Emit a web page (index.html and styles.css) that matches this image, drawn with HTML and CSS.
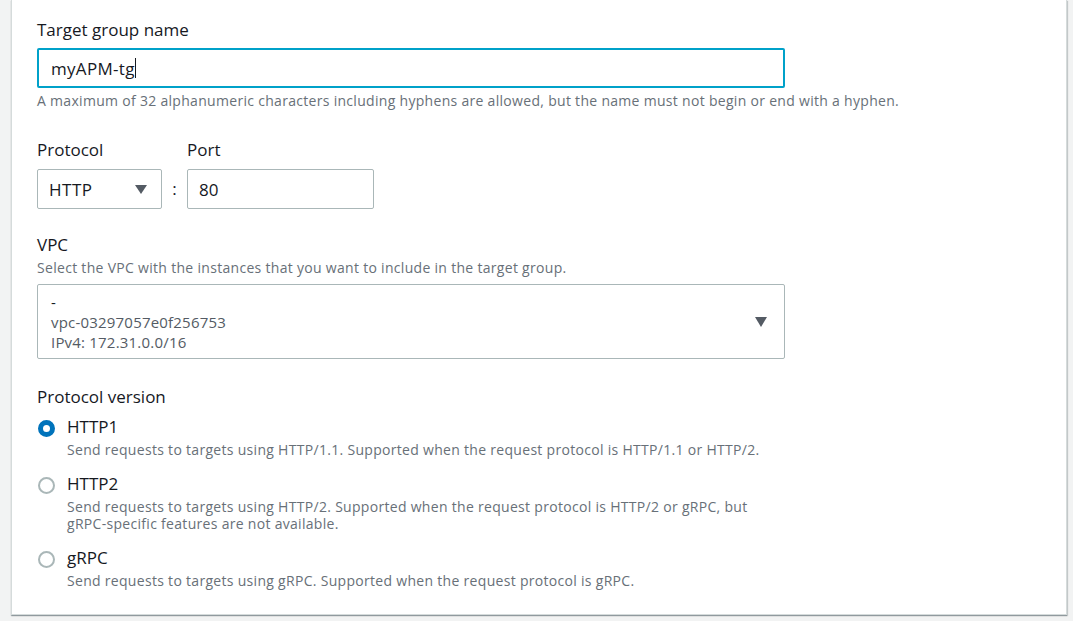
FILE: index.html
```html
<!DOCTYPE html>
<html>
<head>
<meta charset="utf-8">
<link rel="stylesheet" href="styles.css">
</head>
<body>
<div class="page">
  <div class="card">
    <div class="field">
      <div class="label">Target group name</div>
      <div class="input focused"><span>myAPM-tg</span><span class="caret"></span></div>
      <div class="hint">A maximum of 32 alphanumeric characters including hyphens are allowed, but the name must not begin or end with a hyphen.</div>
    </div>

    <div class="row">
      <div class="col">
        <div class="label">Protocol</div>
        <div class="select proto"><span>HTTP</span><span class="arrow"></span></div>
      </div>
      <div class="colon">:</div>
      <div class="col">
        <div class="label">Port</div>
        <div class="input port">80</div>
      </div>
    </div>

    <div class="field vpc-field">
      <div class="label">VPC</div>
      <div class="desc">Select the VPC with the instances that you want to include in the target group.</div>
      <div class="select vpc">
        <div class="vpc-lines">
          <div class="dash">-</div>
          <div>vpc-03297057e0f256753</div>
          <div>IPv4: 172.31.0.0/16</div>
        </div>
        <span class="arrow big"></span>
      </div>
    </div>

    <div class="field pv">
      <div class="label">Protocol version</div>
      <div class="radio">
        <span class="dot checked"></span>
        <div>
          <div class="rlabel">HTTP1</div>
          <div class="rdesc">Send requests to targets using HTTP/1.1. Supported when the request protocol is HTTP/1.1 or HTTP/2.</div>
        </div>
      </div>
      <div class="radio">
        <span class="dot"></span>
        <div>
          <div class="rlabel">HTTP2</div>
          <div class="rdesc">Send requests to targets using HTTP/2. Supported when the request protocol is HTTP/2 or gRPC, but<br>gRPC-specific features are not available.</div>
        </div>
      </div>
      <div class="radio">
        <span class="dot"></span>
        <div>
          <div class="rlabel">gRPC</div>
          <div class="rdesc">Send requests to targets using gRPC. Supported when the request protocol is gRPC.</div>
        </div>
      </div>
    </div>
  </div>
</div>
</body>
</html>
```

FILE: styles.css
```css
* { box-sizing: border-box; }
html, body { margin: 0; padding: 0; }
body {
  background: #f2f3f3;
  font-family: "Open Sans", "Liberation Sans", sans-serif;
  color: #16191f;
  width: 1073px;
  height: 621px;
  overflow: hidden;
}
.page {
  padding: 0 6px 0 11px;
}
.card {
  background: #fff;
  border: 1px solid #d5dbdb;
  border-top: none;
  box-shadow: 0 1px 1px 0 rgba(0,28,36,0.3), 1px 1px 1px 0 rgba(0,28,36,0.15);
  height: 615px;
  padding: 18px 25px 0 25px;
}
.label {
  font-size: 17px;
  line-height: 24px;
  color: #16191f;
}
.input {
  height: 40px;
  border: 1px solid #aab7b8;
  border-radius: 2px;
  font-size: 17px;
  display: flex;
  align-items: center;
  padding: 0 11px;
  color: #16191f;
}
.field > .input.focused {
  margin-top: 6px;
  width: 748px;
  border: 2px solid #00a1c9;
  padding: 0 12px;
  height: 40px;
  letter-spacing: 0.3px;
}
.caret {
  display: inline-block;
  width: 1px;
  height: 20px;
  background: #16191f;
  margin-left: 0;
}
.hint {
  font-size: 14px;
  letter-spacing: 0.3px;
  line-height: 18px;
  color: #687078;
  margin-top: 4px;
  white-space: nowrap;
}
.row {
  display: flex;
  align-items: flex-end;
  margin-top: 28px;
}
.col .label { margin-bottom: 7px; }
.select {
  border: 1px solid #aab7b8;
  border-radius: 2px;
  display: flex;
  align-items: center;
  justify-content: space-between;
  font-size: 17px;
}
.proto {
  width: 125px;
  height: 40px;
  padding: 0 14px 0 11px;
  letter-spacing: 0.5px;
}
.arrow {
  width: 0;
  height: 0;
  border-left: 6px solid transparent;
  border-right: 6px solid transparent;
  border-top: 9px solid #545b64;
}
.arrow.big {
  border-left-width: 6.5px;
  border-right-width: 6.5px;
  border-top-width: 10px;
}
.colon {
  width: 25px;
  text-align: center;
  font-size: 17px;
  line-height: 40px;
  height: 40px;
  color: #16191f;
}
.port {
  width: 187px;
}
.vpc-field { margin-top: 24px; }
.desc {
  font-size: 14px;
  letter-spacing: 0.3px;
  line-height: 18px;
  color: #687078;
  margin-top: 2px;
}
.select.vpc {
  width: 748px;
  height: 75px;
  margin-top: 7px;
  padding: 0 17px 0 13px;
  font-size: 15px;
  letter-spacing: 0.2px;
  color: #545b64;
  align-items: flex-start;
}
.select.vpc .arrow { align-self: center; }
.vpc-lines { line-height: 20px; padding-top: 7px; }
.vpc-lines .dash { color: #16191f; }
.pv { margin-top: 26px; }
.pv > .label { margin-bottom: 6px; }
.radio {
  display: flex;
  align-items: flex-start;
}
.radio + .radio { margin-top: 14px; }
.dot {
  width: 17px;
  height: 17px;
  border-radius: 50%;
  border: 2px solid #aab7b8;
  margin: 5px 12px 0 1px;
  flex: none;
  background: #fff;
}
.dot.checked {
  border: 5px solid #0073bb;
}
.rlabel {
  font-size: 17px;
  line-height: 24px;
  color: #16191f;
}
.rdesc {
  font-size: 14px;
  letter-spacing: 0.3px;
  line-height: 17px;
  margin-top: 2px;
  color: #687078;
  white-space: nowrap;
}
```
